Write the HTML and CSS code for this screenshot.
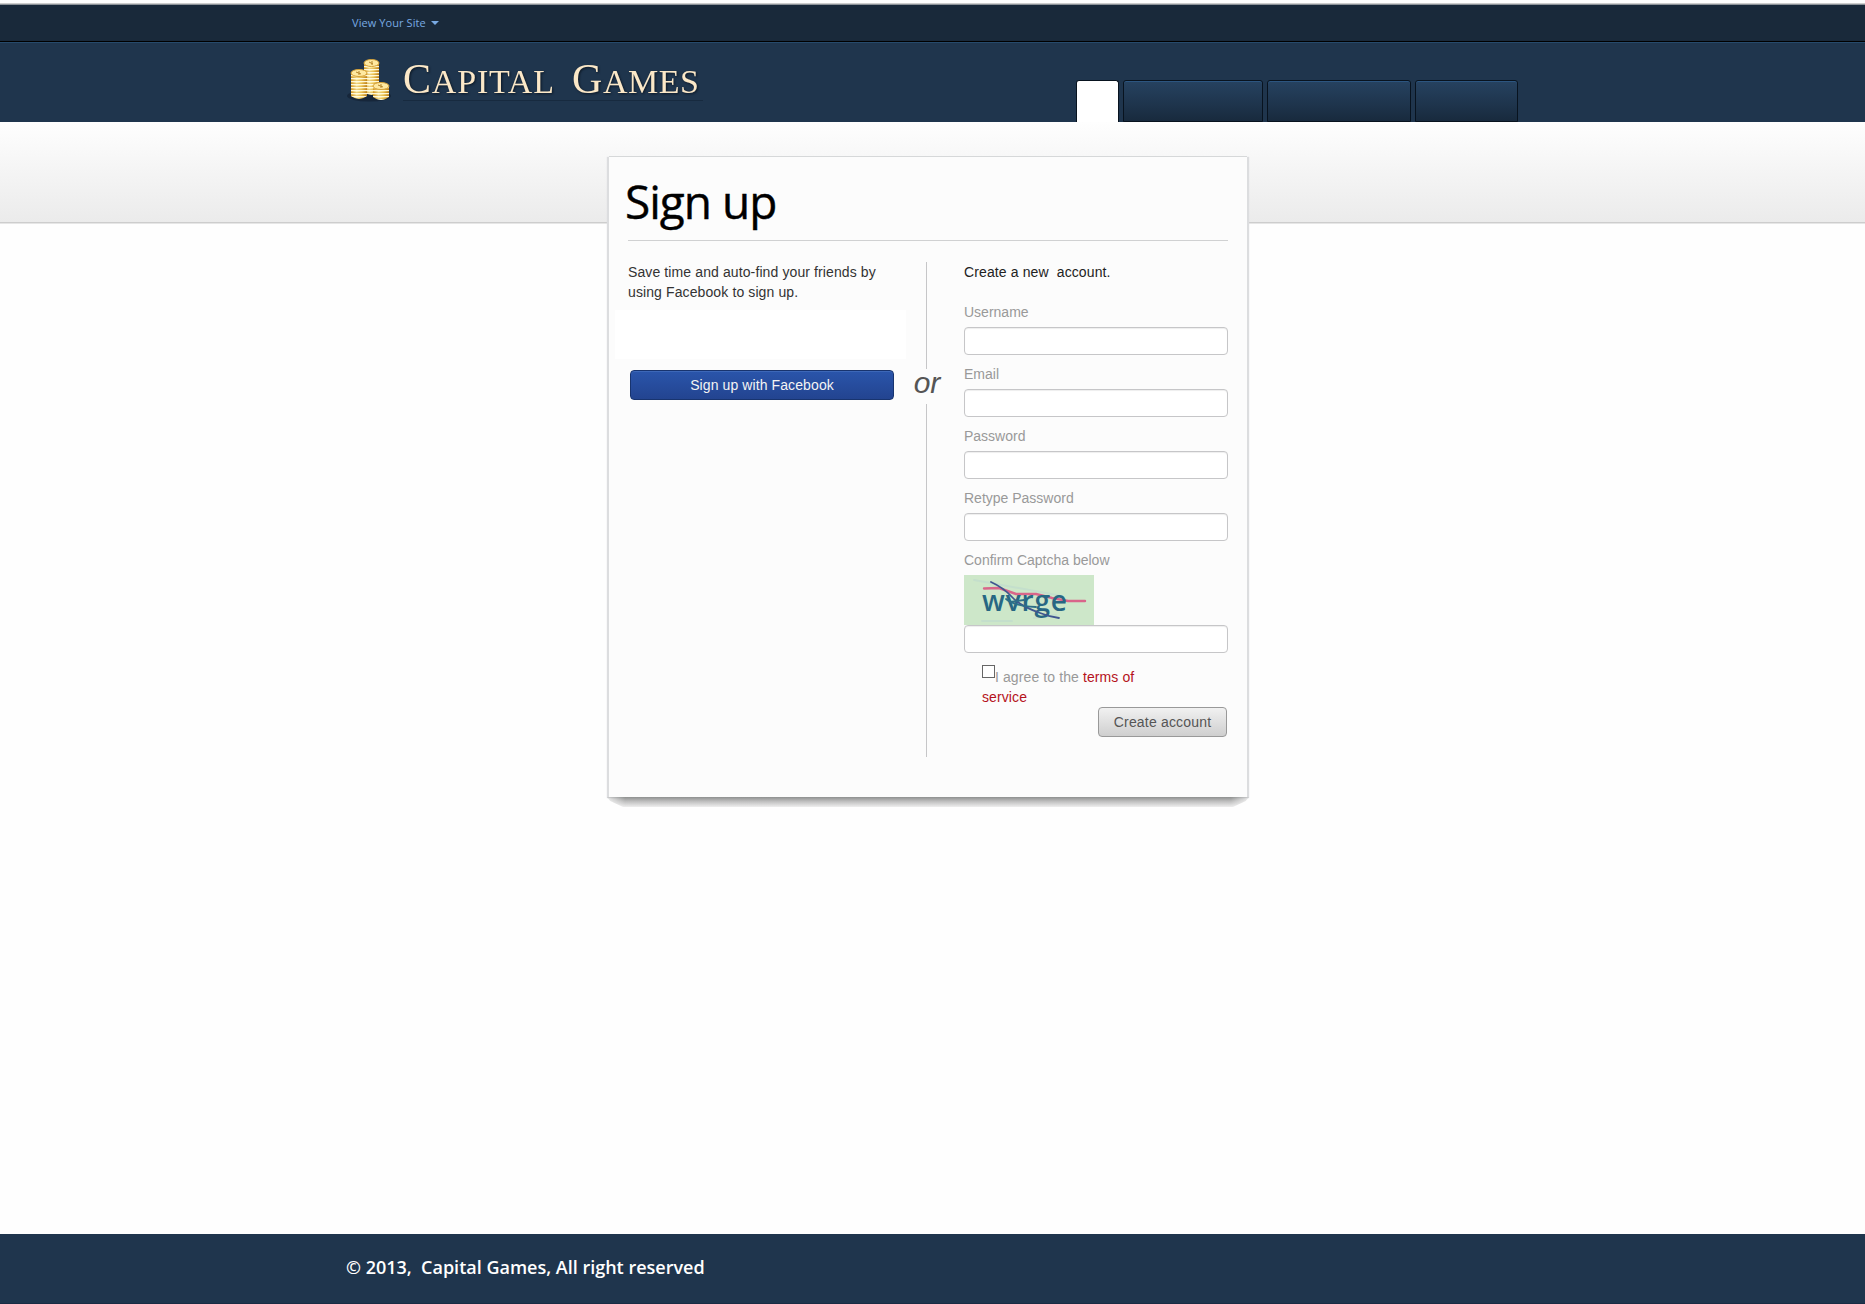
FILE: index.html
```html
<!DOCTYPE html>
<html lang="en">
<head>
<meta charset="utf-8">
<title>Capital Games - Sign up</title>
<link rel="stylesheet" href="styles.css">
</head>
<body>
<div class="topbar"><div class="wrap"><a class="site-link">View Your Site<span class="caret"></span></a></div></div>
<header class="header">
  <div class="wrap header-row">
    <svg class="logo" width="360" height="60" viewBox="0 0 360 60">
      <defs>
        <linearGradient id="gold"><stop offset="0" stop-color="#d89b22"/><stop offset=".35" stop-color="#fff0ae"/><stop offset=".65" stop-color="#f3cf62"/><stop offset="1" stop-color="#bd7c12"/></linearGradient>
        <pattern id="edge" width="16" height="3" patternUnits="userSpaceOnUse"><path d="M0 1.600H16" stroke="#fffbe0" stroke-width="1.100" fill="none"/><path d="M0 0H16" stroke="#c48b22" stroke-width=".6"/></pattern>
      </defs>
      <ellipse cx="22" cy="46" rx="22" ry="5.500" fill="#16263a"/>
      <g fill="url(#gold)">
        <path d="M17 13V42Q24.500 48 32 42V13Z"/><path d="M17 13V42Q24.500 48 32 42V13Z" fill="url(#edge)"/>
        <ellipse cx="24.500" cy="13" rx="7.500" ry="3.500" fill="#ffe9a0" stroke="#d5a137"/><path d="M22 12l4 2m-1-3v4" stroke="#b5852a"/>
        <path d="M4 23V46Q12 52 20 46V23Z"/><path d="M4 23V46Q12 52 20 46V23Z" fill="url(#edge)"/>
        <ellipse cx="12" cy="23" rx="8" ry="3.500" fill="#ffe9a0" stroke="#d5a137"/><path d="M9 22l5 2m-2-3v4" stroke="#b5852a"/>
        <path d="M26 36V47Q34 53 42 47V36Z"/><path d="M26 36V47Q34 53 42 47V36Z" fill="url(#edge)"/>
        <ellipse cx="34" cy="36" rx="8" ry="3.500" fill="#ffe9a0" stroke="#d5a137"/><path d="M31 35l5 2m-2-3v4" stroke="#b5852a"/>
      </g>
      <path d="M56 50.500H356" stroke="#172a3f"/>
      <g class="logo-text">
        <text x="56" y="43" textLength="151"><tspan class="big">C</tspan>APITAL</text>
        <text x="225" y="43" textLength="127"><tspan class="big">G</tspan>AMES</text>
      </g>
    </svg>
    <nav class="tabs"><a class="tab active"></a><a class="tab t2"></a><a class="tab t3"></a><a class="tab t4"></a></nav>
  </div>
</header>
<main class="main">
  <section class="card">
    <h1>Sign up</h1>
    <div class="columns">
      <div class="left">
        <p class="intro">Save time and auto-find your friends by using Facebook to sign up.</p>
        <div class="blank"></div>
        <button class="facebook">Sign up with Facebook</button>
      </div>
      <div class="divider"><i class="line upper"></i><em>or</em><i class="line lower"></i></div>
      <form class="form">
        <p class="form-title">Create a new&nbsp; account.</p>
        <label>Username<input type="text"></label>
        <label>Email<input type="text"></label>
        <label>Password<input type="password"></label>
        <label>Retype Password<input type="password"></label>
        <label>Confirm Captcha below
          <svg class="captcha" width="130" height="50" viewBox="0 0 130 50">
            <rect width="130" height="50" fill="#cde7c9"/>
            <g fill="none" stroke-linecap="round" stroke-linejoin="round">
              <path d="M10 5L60 14L98 21M18 46H48M70 43L92 40" stroke="#c4dfcc" stroke-width="2"/>
              <path d="M20 13.500L35 13L52 19L72 19L88 23L104 26L121 26" stroke="#d9658a" stroke-width="2.400"/>
            </g>
            <text class="captcha-text" x="18" y="36" textLength="85">wvrge</text>
            <g fill="none" stroke-linecap="round"><path d="M27 7Q40 13 48 22T76 38Q86 42 95 43" stroke="#40568f" stroke-width="1.800"/><path d="M42 24Q50 31 72 32M46 27L60 25" stroke="#2d6f88" stroke-width="1.800"/></g>
          </svg><input class="captcha-input" type="text"></label>
        <div class="terms"><span class="check"></span>I agree to the <a>terms of service</a></div>
        <button class="create" type="button">Create account</button>
      </form>
    </div>
  </section>
  <div class="card-shadow"></div>
</main>
<footer class="footer"><div class="wrap">© 2013,&nbsp; Capital Games, All right reserved</div></footer>
</body>
</html>
```
FILE: styles.css
```css
* { box-sizing: border-box; }
body { margin: 0; min-height: 1304px; display: flex; flex-direction: column; background: #fefefe; font: 14px/20px "Liberation Sans", Arial, sans-serif; }
p, h1 { margin: 0; }
.wrap { width: 1171px; margin-left: 347px; }
.topbar { height: 42px; border-bottom: 1px solid #000; background: linear-gradient(#fefefe 3px, #ccc 3px, #ccc 4px, #8c9298 4px, #8c9298 5px, #19293a 5px); }
.site-link { display: flex; align-items: center; gap: 5px; padding: 13px 0 0 5px; font: 11px/20px "Open Sans", sans-serif; letter-spacing: 0.080px; color: #78a9e2; }
.caret { border: 4px solid transparent; border-top-color: #78a9e2; border-bottom: 0; }
.header { height: 80px; background: #1f354d; border-top: 1px solid #264a6c; }
.header-row { display: flex; justify-content: space-between; align-items: flex-end; height: 79px; }
.logo { align-self: flex-start; margin-top: 7px; }
.logo-text { font: 34px "Liberation Serif", serif; fill: #fbe8c8; filter: drop-shadow(1px 1px 1px #0c1724); }
.logo-text .big { font-size: 42px; }
.tabs { display: flex; gap: 4px; height: 42px; }
.tab { border: 1px solid #08131f; border-radius: 3px 3px 0 0; background: linear-gradient(#264260, #1e344c 60%, #182a3d); box-shadow: inset 0 1px #2c5580; }
.tab.active { width: 43px; background: #fff; border-bottom: 0; box-shadow: none; }
.t2 { width: 140px; }
.t3 { width: 144px; }
.t4 { width: 103px; }
.main { flex: 1; padding: 34px 0 0 609px; background: linear-gradient(#fefefe, #ebebeb 100px, #cdcdcd 100px, #cdcdcd 101px, #e6e6e6 101px, #e6e6e6 102px, transparent 102px) no-repeat; }
.card { width: 638px; height: 641px; padding: 0 19px; background: #fcfcfc; border-top: 1px solid #d6d8d9; box-shadow: -2px 1px 1px #dcdddf, 2px 1px 1px #dcdddf; }
.card-shadow { width: 642px; height: 10px; margin-left: -2px; background: linear-gradient(#8e908f, #bbb 40%, #eee); clip-path: polygon(0 0, 100% 0, 99.5% 40%, 97.5% 100%, 2.500% 100%, .5% 40%); -webkit-mask-image: linear-gradient(90deg, rgba(0,0,0,.2), #000 18px, #000 624px, rgba(0,0,0,.2)); mask-image: linear-gradient(90deg, rgba(0,0,0,.2), #000 18px, #000 624px, rgba(0,0,0,.2)); }
h1 { height: 84px; padding: 13px 0 0; border-bottom: 1px solid #d0d1d2; font: 46px/63px "Open Sans", sans-serif; letter-spacing: -1px; text-indent: -3px; -webkit-text-stroke: 0.400px #000; color: #000; }
.columns { display: flex; padding-top: 21px; }
.left { width: 279px; }
.intro { width: 260px; letter-spacing: 0.110px; color: #333; }
.blank { width: 291px; height: 49px; margin: 8px 0 11px -13px; background: #fff; }
.facebook { display: block; width: 264px; height: 30px; margin-left: 2px; padding: 0; border: 1px solid #18346f; border-radius: 4px; background: linear-gradient(#2a55ab, #234490); box-shadow: inset 0 1px #3c67b8; font: inherit; letter-spacing: 0.100px; color: #f4f4f4; }
.divider { width: 38px; height: 495px; display: flex; flex-direction: column; align-items: center; }
.line { width: 1px; background: #c6c6c8; }
.upper { height: 107px; }
.lower { height: 353px; }
.divider em { height: 35px; padding-left: 2px; font-size: 30px; line-height: 28px; color: #555; }
.form { width: 264px; margin-left: 19px; display: flex; flex-direction: column; color: #999; }
.form-title { margin-bottom: 20px; letter-spacing: 0.120px; color: #222; }
label { margin-bottom: 9px; }
input { display: block; width: 264px; height: 28px; margin-top: 5px; border: 1px solid #c6c6c8; border-radius: 4px; background: #fff; box-shadow: inset 0 1px 1px #eee; }
.captcha { display: block; margin-top: 5px; }
.captcha-input { margin-top: 0; }
.captcha-text { font: 600 28px "Open Sans", sans-serif; fill: #276783; }
.terms { width: 180px; padding-left: 18px; margin-top: 3px; letter-spacing: 0.100px; }
.check { display: inline-block; width: 13px; height: 13px; border: 1px solid #666; background: #fff; vertical-align: 4px; line-height: 0; }
.terms a { color: #b5121b; }
.create { align-self: flex-end; width: 129px; height: 30px; margin: 0 1px 0 0; padding: 0; border: 1px solid #999; border-radius: 4px; background: linear-gradient(#f1f1f1, #cfcfcf); font: inherit; letter-spacing: 0.180px; color: #555; }
.footer { height: 70px; background: #1f354d; border-bottom: 1px solid #192b43; color: #fff; font: 600 18px/25px "Open Sans", sans-serif; padding-top: 21px; }
.footer .wrap { margin-left: 346px; }
```
